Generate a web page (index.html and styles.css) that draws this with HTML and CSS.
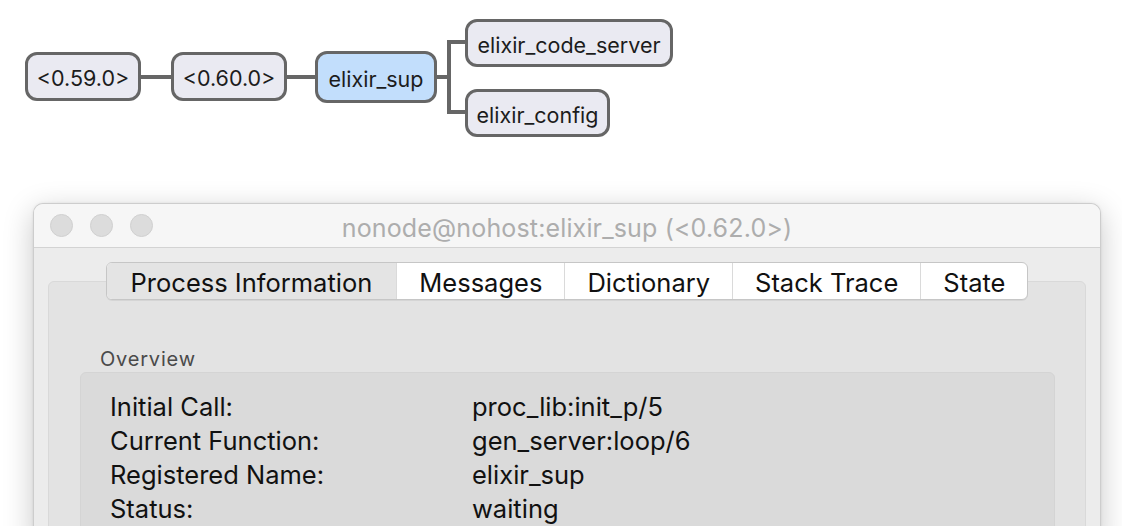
FILE: index.html
```html
<!DOCTYPE html>
<html>
<head>
<meta charset="utf-8">
<link rel="stylesheet" href="styles.css">
</head>
<body>
<div class="diagram">
  <svg class="edges" width="700" height="160" viewBox="0 0 700 160">
    <g stroke="#666666" stroke-width="4" fill="none">
      <line x1="140" y1="77" x2="172" y2="77"/>
      <line x1="286" y1="77" x2="316" y2="77"/>
      <line x1="436" y1="77" x2="451" y2="77"/>
      <path d="M466 42 H449 V112 H466"/>
    </g>
  </svg>
  <div class="node n1">&lt;0.59.0&gt;</div>
  <div class="node n2">&lt;0.60.0&gt;</div>
  <div class="node n3 selected">elixir_sup</div>
  <div class="node n4">elixir_code_server</div>
  <div class="node n5">elixir_config</div>
</div>

<div class="window">
  <div class="titlebar">
    <div class="lights"><span></span><span></span><span></span></div>
    <div class="title">nonode@nohost:elixir_sup (&lt;0.62.0&gt;)</div>
  </div>
  <div class="wbody">
    <div class="tabs-wrap">
      <div class="tabs">
        <div class="tab active">Process Information</div>
        <div class="tab">Messages</div>
        <div class="tab">Dictionary</div>
        <div class="tab">Stack Trace</div>
        <div class="tab">State</div>
      </div>
    </div>
    <div class="panel">
      <div class="section-label">Overview</div>
      <div class="group">
        <div class="row"><span class="k">Initial Call:</span><span class="v">proc_lib:init_p/5</span></div>
        <div class="row"><span class="k">Current Function:</span><span class="v">gen_server:loop/6</span></div>
        <div class="row"><span class="k">Registered Name:</span><span class="v">elixir_sup</span></div>
        <div class="row"><span class="k">Status:</span><span class="v">waiting</span></div>
      </div>
    </div>
  </div>
</div>
</body>
</html>
```

FILE: styles.css
```css
html, body {
  margin: 0;
  padding: 0;
}
body {
  width: 1122px;
  height: 526px;
  overflow: hidden;
  background: #ffffff;
  font-family: "Inter", "Liberation Sans", sans-serif;
  color: #1a1a1a;
}

/* ---------- diagram ---------- */
.diagram {
  position: relative;
  height: 203px;
}
.edges {
  position: absolute;
  left: 0;
  top: 0;
}
.node {
  position: absolute;
  box-sizing: border-box;
  display: flex;
  align-items: center;
  justify-content: center;
  border: 3px solid #666666;
  border-radius: 12px;
  background: #eaeaf2;
  font-size: 21.5px;
  color: #1c1c1c;
  padding-top: 3px;
  white-space: nowrap;
}
.node.selected {
  background: #c2defc;
}
.n1 { left: 25px; top: 52px; width: 116px; height: 49px; }
.n2 { left: 171px; top: 52px; width: 116px; height: 49px; }
.n3 { left: 315px; top: 51px; width: 122px; height: 52px; }
.n4 { left: 465px; top: 19px; width: 208px; height: 48px; }
.n5 { left: 465px; top: 89px; width: 145px; height: 48px; }

/* ---------- window ---------- */
.window {
  margin-left: 33px;
  width: 1068px;
  height: 340px;
  box-sizing: border-box;
  border: 1px solid #cdcdcd;
  border-bottom: none;
  border-radius: 10px 10px 0 0;
  background: #ececec;
  box-shadow: 0 8px 30px rgba(0, 0, 0, 0.22), 0 0 3px rgba(0, 0, 0, 0.08);
  overflow: hidden;
}
.titlebar {
  position: relative;
  height: 43px;
  border-bottom: 1px solid #d3d3d3;
  background: #f6f6f6;
  display: flex;
  align-items: center;
  justify-content: center;
}
.lights {
  position: absolute;
  left: 16px;
  top: 10px;
  display: flex;
  gap: 17px;
}
.lights span {
  width: 23px;
  height: 23px;
  box-sizing: border-box;
  border-radius: 50%;
  background: #dcdcdc;
  border: 1px solid #d0d0d0;
}
.title {
  font-size: 25px;
  color: #adadad;
  padding-top: 4px;
  letter-spacing: 0.15px;
}
.wbody {
  padding: 14px 14px 0 14px;
}
.tabs-wrap {
  position: relative;
  z-index: 1;
  display: flex;
  justify-content: center;
}
.tabs {
  display: flex;
  height: 38px;
  box-sizing: border-box;
  border: 1px solid #c6c6c6;
  border-radius: 6px;
  background: #ffffff;
  box-shadow: 0 1px 0 rgba(0, 0, 0, 0.06);
  overflow: hidden;
}
.tab {
  display: flex;
  align-items: center;
  padding: 2px 22px 0 22px;
  font-size: 25.5px;
  color: #111111;
  border-left: 1px solid #dadada;
  white-space: nowrap;
}
.tab:first-child {
  border-left: none;
  padding-left: 24px;
  padding-right: 24px;
}
.tab.active {
  background: #e4e4e4;
}
.panel {
  margin-top: -19px;
  height: 400px;
  box-sizing: border-box;
  border: 1px solid #d9d9d9;
  border-radius: 6px;
  background: #e3e3e3;
  padding: 65px 30px 0 31px;
}
.section-label {
  font-size: 20px;
  line-height: 24px;
  letter-spacing: 0.8px;
  color: #4a4a4a;
  padding-left: 20px;
  margin-bottom: 1px;
}
.group {
  box-sizing: border-box;
  height: 300px;
  border: 1px solid #d4d4d4;
  border-radius: 6px;
  background: #dadada;
  padding: 17px 0 0 29px;
}
.row {
  display: grid;
  grid-template-columns: 362px 1fr;
  font-size: 25.5px;
  line-height: 34px;
  color: #111111;
}
```
